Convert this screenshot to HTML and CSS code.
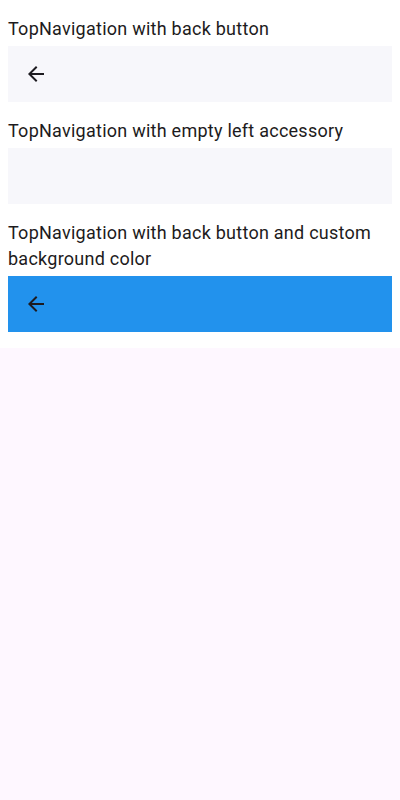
FILE: index.html
```html
<!DOCTYPE html>
<html>
<head>
<meta charset="utf-8">
<link rel="stylesheet" href="styles.css">
</head>
<body>
<main class="panel">
  <section class="demo">
    <p class="label">TopNavigation with back button</p>
    <div class="bar">
      <button class="back" aria-label="Back">
        <svg viewBox="0 0 24 24" width="24" height="24"><path d="M20 11H7.83l5.59-5.59L12 4l-8 8 8 8 1.41-1.41L7.83 13H20v-2z"/></svg>
      </button>
    </div>
  </section>
  <section class="demo">
    <p class="label">TopNavigation with empty left accessory</p>
    <div class="bar"></div>
  </section>
  <section class="demo">
    <p class="label">TopNavigation with back button and custom background color</p>
    <div class="bar bar-blue">
      <button class="back" aria-label="Back">
        <svg viewBox="0 0 24 24" width="24" height="24"><path d="M20 11H7.83l5.59-5.59L12 4l-8 8 8 8 1.41-1.41L7.83 13H20v-2z"/></svg>
      </button>
    </div>
  </section>
</main>
</body>
</html>
```
FILE: styles.css
```css
html, body {
  margin: 0;
  padding: 0;
  background: #fef7ff;
  height: 100%;
}
body {
  font-family: Roboto, "Noto Sans", sans-serif;
  color: #1d1b20;
}
.panel {
  background: #ffffff;
  padding: 0 8px 16px;
  display: flex;
  flex-direction: column;
}
.demo {
  display: flex;
  flex-direction: column;
  padding-top: 16px;
}
.label {
  margin: 0 0 4px;
  font-size: 18px;
  line-height: 26px;
  letter-spacing: 0.25px;
}
.bar {
  height: 56px;
  background: #f7f7fb;
  display: flex;
  align-items: center;
  padding-left: 16px;
}
.bar-blue {
  background: #2292ed;
}
.back {
  border: 0;
  background: none;
  padding: 0;
  width: 24px;
  height: 24px;
  display: flex;
}
.back svg {
  fill: #1d1b20;
}
```
